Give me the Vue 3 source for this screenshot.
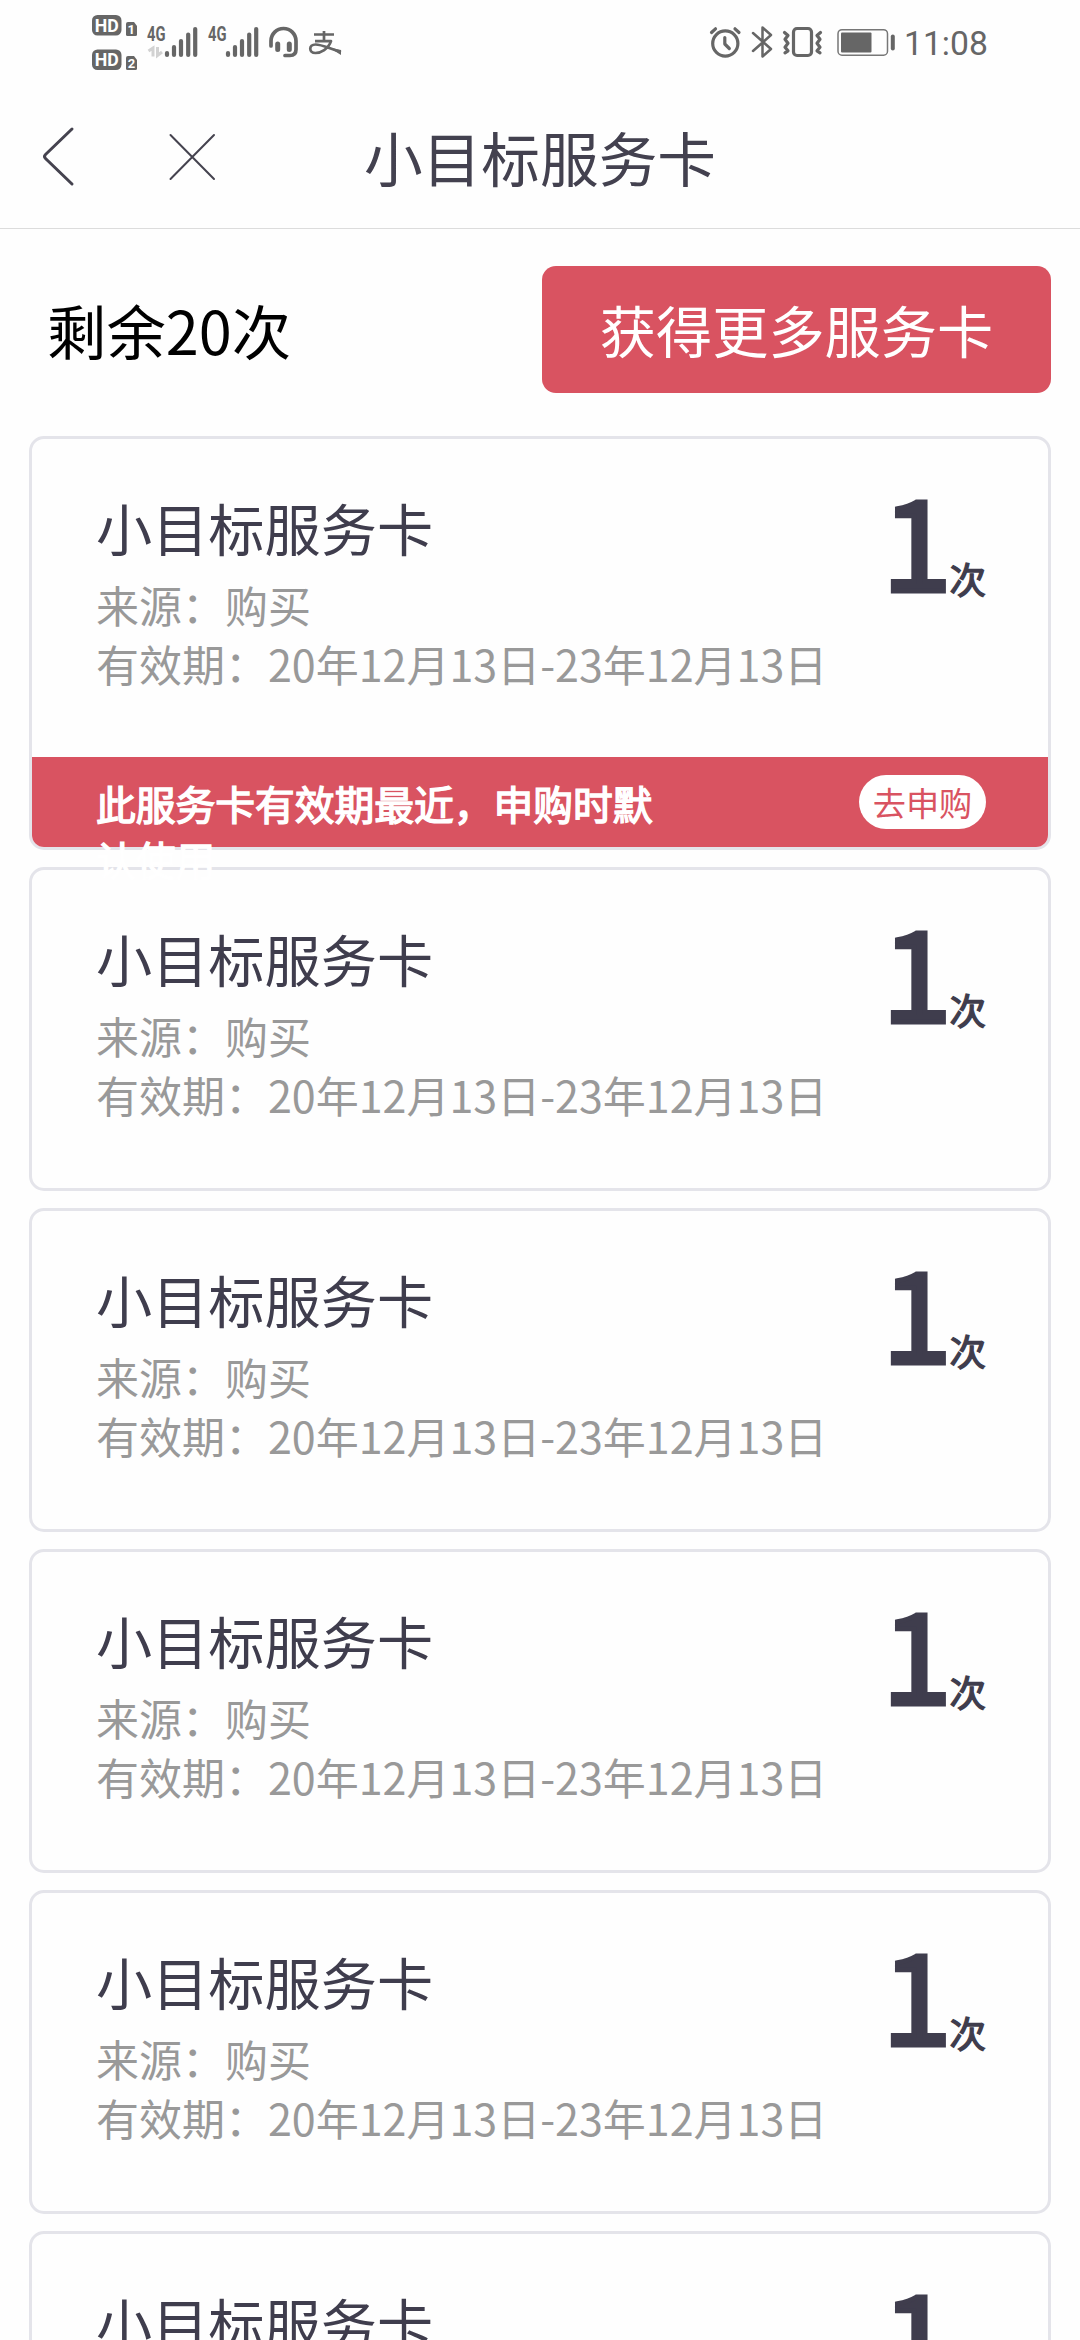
<script setup>
const cards = [
  { id: 1, nearest: true },
  { id: 2, nearest: false },
  { id: 3, nearest: false },
  { id: 4, nearest: false },
  { id: 5, nearest: false },
  { id: 6, nearest: false },
]
const signalBars = [
  { x: 167, top: 53 },
  { x: 174, top: 47 },
  { x: 181, top: 41 },
  { x: 188.2, top: 34.5 },
  { x: 195.2, top: 29 },
]
</script>

<template>
  <div class="page">
    <header class="status">
      <svg class="status-left" viewBox="88 0 260 84" width="260" height="84">
        <g class="solid">
          <rect x="92" y="15" width="29.5" height="20.5" rx="5.5" />
          <rect x="92" y="49.5" width="29.5" height="20.5" rx="5.5" />
          <path d="M128 22h6l3 4v8.500q0 1.500-1.500 1.500h-8q-1.500 0-1.500-1.500v-10.500q0-2 2-2z" />
          <path d="M128 56h6l3 4v8.500q0 1.500-1.500 1.500h-8q-1.500 0-1.500-1.500v-10.500q0-2 2-2z" />
        </g>
        <g class="knock">
          <text x="94.800" y="31.600" font-size="17.500" textLength="24" lengthAdjust="spacingAndGlyphs">HD</text>
          <text x="94.800" y="66.100" font-size="17.500" textLength="24" lengthAdjust="spacingAndGlyphs">HD</text>
          <text x="127.600" y="34" font-size="13">1</text>
          <text x="127.800" y="68" font-size="13">2</text>
        </g>
        <g class="net">
          <text x="147" y="40.500" font-size="20" textLength="18.500" lengthAdjust="spacingAndGlyphs">4G</text>
          <text x="208" y="40.500" font-size="20" textLength="18.500" lengthAdjust="spacingAndGlyphs">4G</text>
        </g>
        <path class="faint" d="M148.500 51l4.500-3v8.500M157.500 47v8.500l4.500-3.500" />
        <g class="bars">
          <path v-for="b in signalBars" :key="b.x" :d="`M${b.x} ${b.top}V55`" />
          <path v-for="b in signalBars" :key="'s' + b.x" :d="`M${b.x + 61} ${b.top}V55`" />
        </g>
        <path class="line w35" d="M271 46V41a12.500 12.500 0 0 1 25 0v8.500q0 6-6 6h-5" />
        <path class="line w45" d="M277.700 44v5.500M289.300 44v5.500" />
        <path class="line w27 butt" d="M314 34.500h20M324 31v10M315 41.200h16C328.500 49 320.500 53 315.500 53c-7 0-7-8.500 0-8.500C322 44.500 329 48.500 341 52" />
        <path class="solid" d="M329 47.500l12 2.500v5z" />
      </svg>

      <div class="status-right">
        <svg viewBox="706 0 194 84" width="194" height="84">
          <g class="line w3">
            <circle cx="725.300" cy="43.500" r="12.600" />
            <path d="M724.800 37.500v6.500l4.500 4.500M711.500 32.500l4-3.700M739 32.500l-4-3.700" />
            <path class="w25" d="M753 33l18 16-8.500 7.500v-29l8.500 7.500-18 16" />
            <rect x="793.500" y="28.500" width="18" height="27" rx="3.500" />
            <path d="M784.500 32.500l3.500 3-3 3.800 3 4-3 4 3 3.500-3 2M820.500 32.500l-3.500 3 3 3.800-3 4 3 4-3 3.500 3 2" />
          </g>
          <rect class="cell" x="838" y="29.700" width="49.500" height="25.500" rx="4" />
          <rect class="solid" x="841" y="32.500" width="30.500" height="20" rx="1" />
          <rect class="solid" x="890.800" y="34.500" width="4" height="16" rx="2" />
        </svg>
        <span class="clock">11:08</span>
      </div>
    </header>

    <nav class="nav">
      <svg class="nav-icons" viewBox="0 0 240 142" width="240" height="142">
        <path class="back" d="M72 43L45.500 68.500q-2 2 0 4L72 98" />
        <path class="close" d="M170.500 49l43.500 44M214 49l-43.500 44" />
      </svg>
      <h1>小目标服务卡</h1>
    </nav>

    <section class="summary">
      <p>剩余20次</p>
      <button type="button">获得更多服务卡</button>
    </section>

    <main class="list">
      <article v-for="card in cards" :key="card.id" class="card">
        <div class="body">
          <div class="info">
            <h2>小目标服务卡</h2>
            <p>来源：购买</p>
            <p>有效期：20年12月13日-23年12月13日</p>
          </div>
          <div class="count"><b>1</b><span>次</span></div>
        </div>
        <div v-if="card.nearest" class="notice">
          <p>此服务卡有效期最近，申购时默认使用</p>
          <button type="button">去申购</button>
        </div>
      </article>
    </main>
  </div>
</template>

<style>
body {
  background: #fefefe;
}
</style>

<style scoped>
.page {
  width: 1080px;
  height: 2340px;
  overflow: hidden;
  background: #fefefe;
  color: #3f3d4d;
  font-family: "Noto Sans CJK SC", sans-serif;
}
h1, h2, p {
  margin: 0;
  font-weight: 400;
}
button {
  border: 0;
  padding: 0;
  font-family: inherit;
  white-space: nowrap;
}
.status {
  display: flex;
  justify-content: space-between;
  height: 86px;
  padding: 0 90px 0 88px;
}
.status-right {
  display: flex;
  align-items: flex-start;
}
.clock {
  width: 86px;
  margin-left: 4px;
  font: 400 33.700px/40px Roboto, sans-serif;
  padding-top: 24px;
  color: #666;
  white-space: nowrap;
}
.solid { fill: #666; }
.knock { fill: #fff; font-family: Roboto, sans-serif; font-weight: 700; }
.net { fill: #666; font-family: Roboto, sans-serif; font-weight: 700; }
.faint { fill: none; stroke: #d2d2d2; stroke-width: 3; }
.bars { fill: none; stroke: #666; stroke-width: 4.200; stroke-linecap: round; }
.line { fill: none; stroke: #666; stroke-linecap: round; stroke-linejoin: round; }
.w25 { stroke-width: 2.500; }
.w27 { stroke-width: 2.700; }
.w3 { stroke-width: 3.200; }
.w35 { stroke-width: 3.700; }
.w45 { stroke-width: 5; }
.butt { stroke-linecap: butt; }
.cell { fill: none; stroke: #777; stroke-width: 1.500; }

.nav {
  display: flex;
  height: 142px;
  border-bottom: 1px solid #dcdcdc;
}
.nav-icons { flex: none; }
.back, .close {
  fill: none;
  stroke: #45434f;
  stroke-linecap: round;
}
.back { stroke-width: 3; }
.close { stroke-width: 2; }
.nav h1 {
  width: 600px;
  text-align: center;
  font-size: 58.700px;
  line-height: 142px;
  color: #43414f;
}

.summary {
  display: flex;
  align-items: center;
  justify-content: space-between;
  height: 127px;
  padding: 37px 29px 43px 47px;
}
.summary p {
  font-size: 59.400px;
  line-height: 127px;
  color: #000;
}
.summary button {
  width: 509px;
  height: 127px;
  padding-bottom: 1px;
  border-radius: 14px;
  background: #d95361;
  color: #fff;
  font-size: 56.200px;
  line-height: 126px;
}

.list {
  display: flex;
  flex-direction: column;
  gap: 17px;
  padding: 0 29px;
}
.card {
  flex: none;
  border: 3px solid #e4e4ea;
  border-radius: 15px;
}
.body {
  display: flex;
  justify-content: space-between;
  height: 318px;
  padding: 0 62px 0 64px;
  box-sizing: border-box;
}
.info {
  padding-top: 46px;
}
.info h2 {
  font-size: 56.200px;
  line-height: 83px;
}
.info p {
  font-size: 43px;
  line-height: 59px;
  color: #999;
  white-space: nowrap;
}
.info h2 + p {
  margin-top: 7px;
}
.count {
  display: flex;
  align-items: flex-start;
  line-height: 190px;
  padding-top: 3px;
  height: 190px;
}
.count b {
  margin-right: -2px;
  font-size: 125px;
  font-weight: 400;
  -webkit-text-stroke: 4.800px #3f3d4d;
}
.count span {
  margin-top: 42px;
  font-size: 36.500px;
  -webkit-text-stroke: 1.300px #3f3d4d;
}
.notice {
  display: flex;
  justify-content: space-between;
  align-items: flex-start;
  height: 90px;
  padding: 0 62px 0 64px;
  box-sizing: border-box;
  border-radius: 0 0 12px 12px;
  background: #d95361;
}
.notice p {
  position: relative;
  z-index: 1;
  width: 570px;
  padding-top: 18px;
  font-size: 39.750px;
  -webkit-text-stroke: 1.500px #fff;
  line-height: 56px;
  color: #fff;
}
.notice button {
  width: 127px;
  height: 54px;
  margin-top: 18px;
  border-radius: 27px;
  background: #fff;
  color: #d95361;
  font-size: 33.200px;
  line-height: 54px;
}
</style>
